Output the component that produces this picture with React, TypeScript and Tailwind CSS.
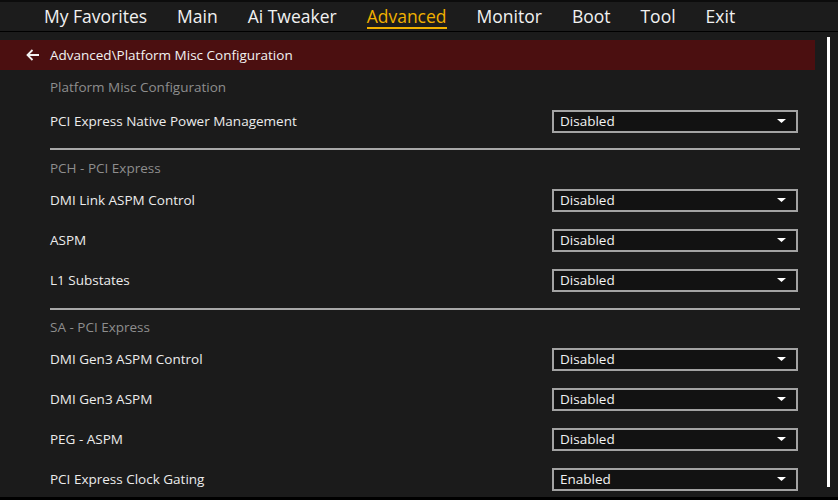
import React from 'react';

interface Item {
  label: string;
  value: string;
}

interface Section {
  title: string;
  items: Item[];
}

const tabs = ['My Favorites', 'Main', 'Ai Tweaker', 'Advanced', 'Monitor', 'Boot', 'Tool', 'Exit'];

const sections: Section[] = [
  {
    title: 'Platform Misc Configuration',
    items: [{ label: 'PCI Express Native Power Management', value: 'Disabled' }],
  },
  {
    title: 'PCH - PCI Express',
    items: [
      { label: 'DMI Link ASPM Control', value: 'Disabled' },
      { label: 'ASPM', value: 'Disabled' },
      { label: 'L1 Substates', value: 'Disabled' },
    ],
  },
  {
    title: 'SA - PCI Express',
    items: [
      { label: 'DMI Gen3 ASPM Control', value: 'Disabled' },
      { label: 'DMI Gen3 ASPM', value: 'Disabled' },
      { label: 'PEG - ASPM', value: 'Disabled' },
      { label: 'PCI Express Clock Gating', value: 'Enabled' },
    ],
  },
];

function Dropdown({ value }: { value: string }) {
  return (
    <div className="mr-[2px] flex h-[23px] w-[246px] items-center justify-between border-2 border-[#a3a3a3] bg-[#121212] pl-[6px] pr-[10px]">
      <span className="pt-[2px] text-[13.5px] leading-none text-[#f2f2f2]">{value}</span>
      <svg width="9" height="4" viewBox="0 0 9 4">
        <path d="M0 0 H9 L4.5 4 Z" fill="#ffffff" />
      </svg>
    </div>
  );
}

function Row({ item }: { item: Item }) {
  return (
    <div className="flex h-[40px] shrink-0 items-center justify-between">
      <span className="text-[13.5px] leading-[20px] text-[#ececec]">{item.label}</span>
      <Dropdown value={item.value} />
    </div>
  );
}

export default function App() {
  return (
    <div
      className="flex h-[500px] w-[838px] flex-col overflow-hidden border-b-[3px] border-black bg-[#1b1b1b]"
      style={{ fontFamily: '"Open Sans", "Noto Sans", sans-serif' }}
    >
      {/* top tabs */}
      <nav className="flex h-[32px] shrink-0 items-center border-t-2 border-b border-t-[#0c0c0c] border-b-black bg-[#1c1c1c] pl-[44px]">
        <div className="flex gap-[30px]">
          {tabs.map((t) => (
            <span
              key={t}
              className={
                t === 'Advanced'
                  ? 'border-b-2 border-[#f0b000] text-[17.5px] leading-[22px] text-[#f0b000]'
                  : 'border-b-2 border-transparent text-[17.5px] leading-[22px] text-[#f1f1f1]'
              }
            >
              {t}
            </span>
          ))}
        </div>
      </nav>

      <div className="flex min-h-0 flex-1 overflow-hidden">
        <div className="w-[815px] pt-[8px]">
          <div className="flex h-[30px] items-center gap-[10px] bg-[#4b0f10] pl-[26px]">
            <svg width="14" height="12" viewBox="0 0 14 12" fill="none" stroke="#f2f2f2" strokeWidth="1.8">
              <path d="M13 6 H1.5 M6.5 1 L1.5 6 L6.5 11" />
            </svg>
            <span className="text-[13.5px] leading-[20px] text-[#f2f2f2]">Advanced\Platform Misc Configuration</span>
          </div>

          <div className="pl-[50px] pr-[15px]">
            {sections.map((s, i) => (
              <div key={s.title}>
                {i === 1 && <div className="mt-[7px] h-[2px] bg-[#a8a8a8]" />}
                {i === 2 && <div className="mt-[8px] h-[2px] bg-[#a8a8a8]" />}
                <div
                  className={
                    i === 0 ? 'pt-[7px] pb-[4px]' : i === 1 ? 'pt-[8px] pb-[2px]' : 'pt-[7px] pb-[2px]'
                  }
                >
                  <div className="text-[13.5px] leading-[20px] text-[#8e8e8e]">{s.title}</div>
                </div>
                {s.items.map((it) => (
                  <Row key={it.label} item={it} />
                ))}
              </div>
            ))}
          </div>
        </div>

        <div className="ml-[12px] mt-[5px] h-[450px] w-[3px] bg-white" />
      </div>
    </div>
  );
}
